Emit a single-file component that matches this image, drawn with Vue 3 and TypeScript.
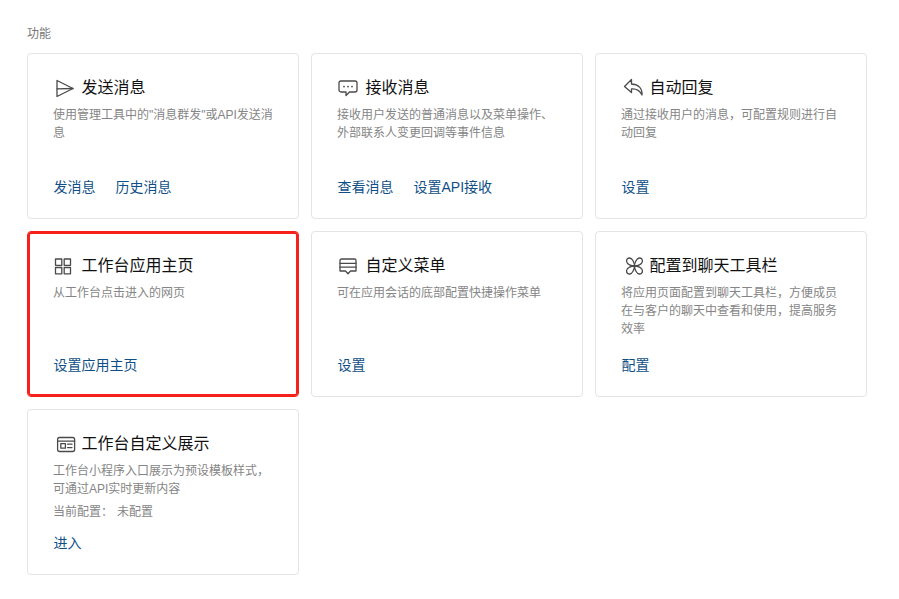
<script setup lang="ts">
interface Feature {
  title: string
  desc: string
  links: string[]
  icon: string
  status?: string
  active?: boolean
}

const features: Feature[] = [
  { title: '发送消息', desc: '使用管理工具中的"消息群发"或API发送消息', links: ['发消息', '历史消息'], icon: 'send' },
  { title: '接收消息', desc: '接收用户发送的普通消息以及菜单操作、外部联系人变更回调等事件信息', links: ['查看消息', '设置API接收'], icon: 'chat' },
  { title: '自动回复', desc: '通过接收用户的消息，可配置规则进行自动回复', links: ['设置'], icon: 'reply' },
  { title: '工作台应用主页', desc: '从工作台点击进入的网页', links: ['设置应用主页'], icon: 'grid', active: true },
  { title: '自定义菜单', desc: '可在应用会话的底部配置快捷操作菜单', links: ['设置'], icon: 'menu' },
  { title: '配置到聊天工具栏', desc: '将应用页面配置到聊天工具栏，方便成员在与客户的聊天中查看和使用，提高服务效率', links: ['配置'], icon: 'tools' },
  { title: '工作台自定义展示', desc: '工作台小程序入口展示为预设模板样式，可通过API实时更新内容', links: ['进入'], icon: 'card', status: '未配置' }
]

const petal = 'M12.5 12C9.5 12 5 10.5 4.6 7.5 4.3 5 6 3.8 7.8 4 10.5 4.3 12.5 9 12.5 12Z'
</script>

<template>
  <main class="page">
    <div class="label">功能</div>
    <section class="grid">
      <article v-for="f in features" :key="f.title" class="card" :class="{ active: f.active }">
        <header class="head">
          <svg class="icon" viewBox="0 0 24 24" width="24" height="24" fill="none" stroke="#4a4a4a" stroke-width="1.3" stroke-linejoin="round" stroke-linecap="round">
            <template v-if="f.icon === 'send'">
              <path d="M4 4.5 20 12.5 4 20.5Z" />
              <path d="M4 12.8 20 12.5" />
            </template>
            <template v-else-if="f.icon === 'chat'">
              <path d="M4 5h14a2 2 0 0 1 2 2v7a2 2 0 0 1-2 2h-5.5L9 19.5V16H4a2 2 0 0 1-2-2V7a2 2 0 0 1 2-2Z" />
              <path d="M7 10.6h.01M11 10.6h.01M15 10.6h.01" stroke-width="1.8" />
            </template>
            <template v-else-if="f.icon === 'reply'">
              <path d="M10.5 3.5 3.5 10.5 10.5 16.5V13C15 12.6 18.5 14 21 19 21.5 12.5 17.5 8.3 10.5 8Z" />
            </template>
            <template v-else-if="f.icon === 'grid'">
              <rect x="2.5" y="5" width="6.3" height="6.3" />
              <rect x="11.2" y="5" width="6.3" height="6.3" />
              <rect x="2.5" y="13.5" width="6.3" height="6.3" />
              <rect x="11.2" y="13.5" width="6.3" height="6.3" />
            </template>
            <template v-else-if="f.icon === 'menu'">
              <path d="M4.5 5h13a1.5 1.5 0 0 1 1.5 1.5V17h-5.5L11 19.7 8.5 17H3V6.5A1.5 1.5 0 0 1 4.5 5Z" />
              <path d="M3 9.3h16M3 13.2h16" />
            </template>
            <template v-else-if="f.icon === 'tools'">
              <g transform="translate(1 0)">
                <path :d="petal" />
                <path :d="petal" transform="matrix(-1 0 0 1 25 0)" />
                <path :d="petal" transform="matrix(1 0 0 -1 0 24)" />
                <path :d="petal" transform="matrix(-1 0 0 -1 25 24)" />
              </g>
            </template>
            <template v-else>
              <rect x="4.6" y="5.5" width="17" height="14" rx="2" />
              <path d="M4.6 9.2h17" />
              <rect x="7.8" y="11.6" width="4.6" height="4.6" />
              <path d="M14.5 12.2h4.5M14.5 15.6h4.5" />
            </template>
          </svg>
          <h3 class="title">{{ f.title }}</h3>
        </header>
        <p class="desc">{{ f.desc }}</p>
        <p v-if="f.status" class="status"><span>当前配置：</span><span class="status-value">{{ f.status }}</span></p>
        <nav class="links">
          <a v-for="l in f.links" :key="l" class="link">{{ l }}</a>
        </nav>
      </article>
    </section>
  </main>
</template>

<style>
html, body {
  background: #fff;
  overflow: hidden;
}
</style>

<style scoped>
.page {
  padding: 25px 32px 0 27px;
  font-family: "Liberation Sans", "Noto Sans CJK SC", sans-serif;
}
.label {
  font-size: 12px;
  line-height: 18px;
  color: #787878;
  margin-bottom: 10px;
}
.grid {
  display: grid;
  grid-template-columns: repeat(3, 272px);
  grid-auto-rows: 166px;
  gap: 12px;
}
.card {
  display: flex;
  flex-direction: column;
  box-sizing: border-box;
  padding: 22px 25px 21px 25px;
  border: 1px solid #e4e4e4;
  border-radius: 4px;
  background: #fff;
}
.card.active {
  border-color: #f5211a;
  box-shadow: inset 0 0 0 2px #f5211a;
}
.head {
  display: flex;
  align-items: center;
  height: 24px;
  margin-bottom: 6px;
}
.icon {
  flex: none;
  margin-right: 4.5px;
}
.title {
  margin: 0;
  font-size: 16px;
  font-weight: 400;
  line-height: 22px;
  color: #111;
}
.desc {
  margin: 0;
  font-size: 12px;
  line-height: 18px;
  color: #858585;
}
.status {
  margin: 5px 0 0;
  font-size: 12px;
  line-height: 18px;
  color: #858585;
}
.status-value {
  margin-left: 4px;
}
.links {
  display: flex;
  gap: 20px;
  margin-top: auto;
  padding-left: 0.5px;
}
.link {
  font-size: 14px;
  line-height: 20px;
  color: #0f4f86;
  cursor: pointer;
}
</style>
